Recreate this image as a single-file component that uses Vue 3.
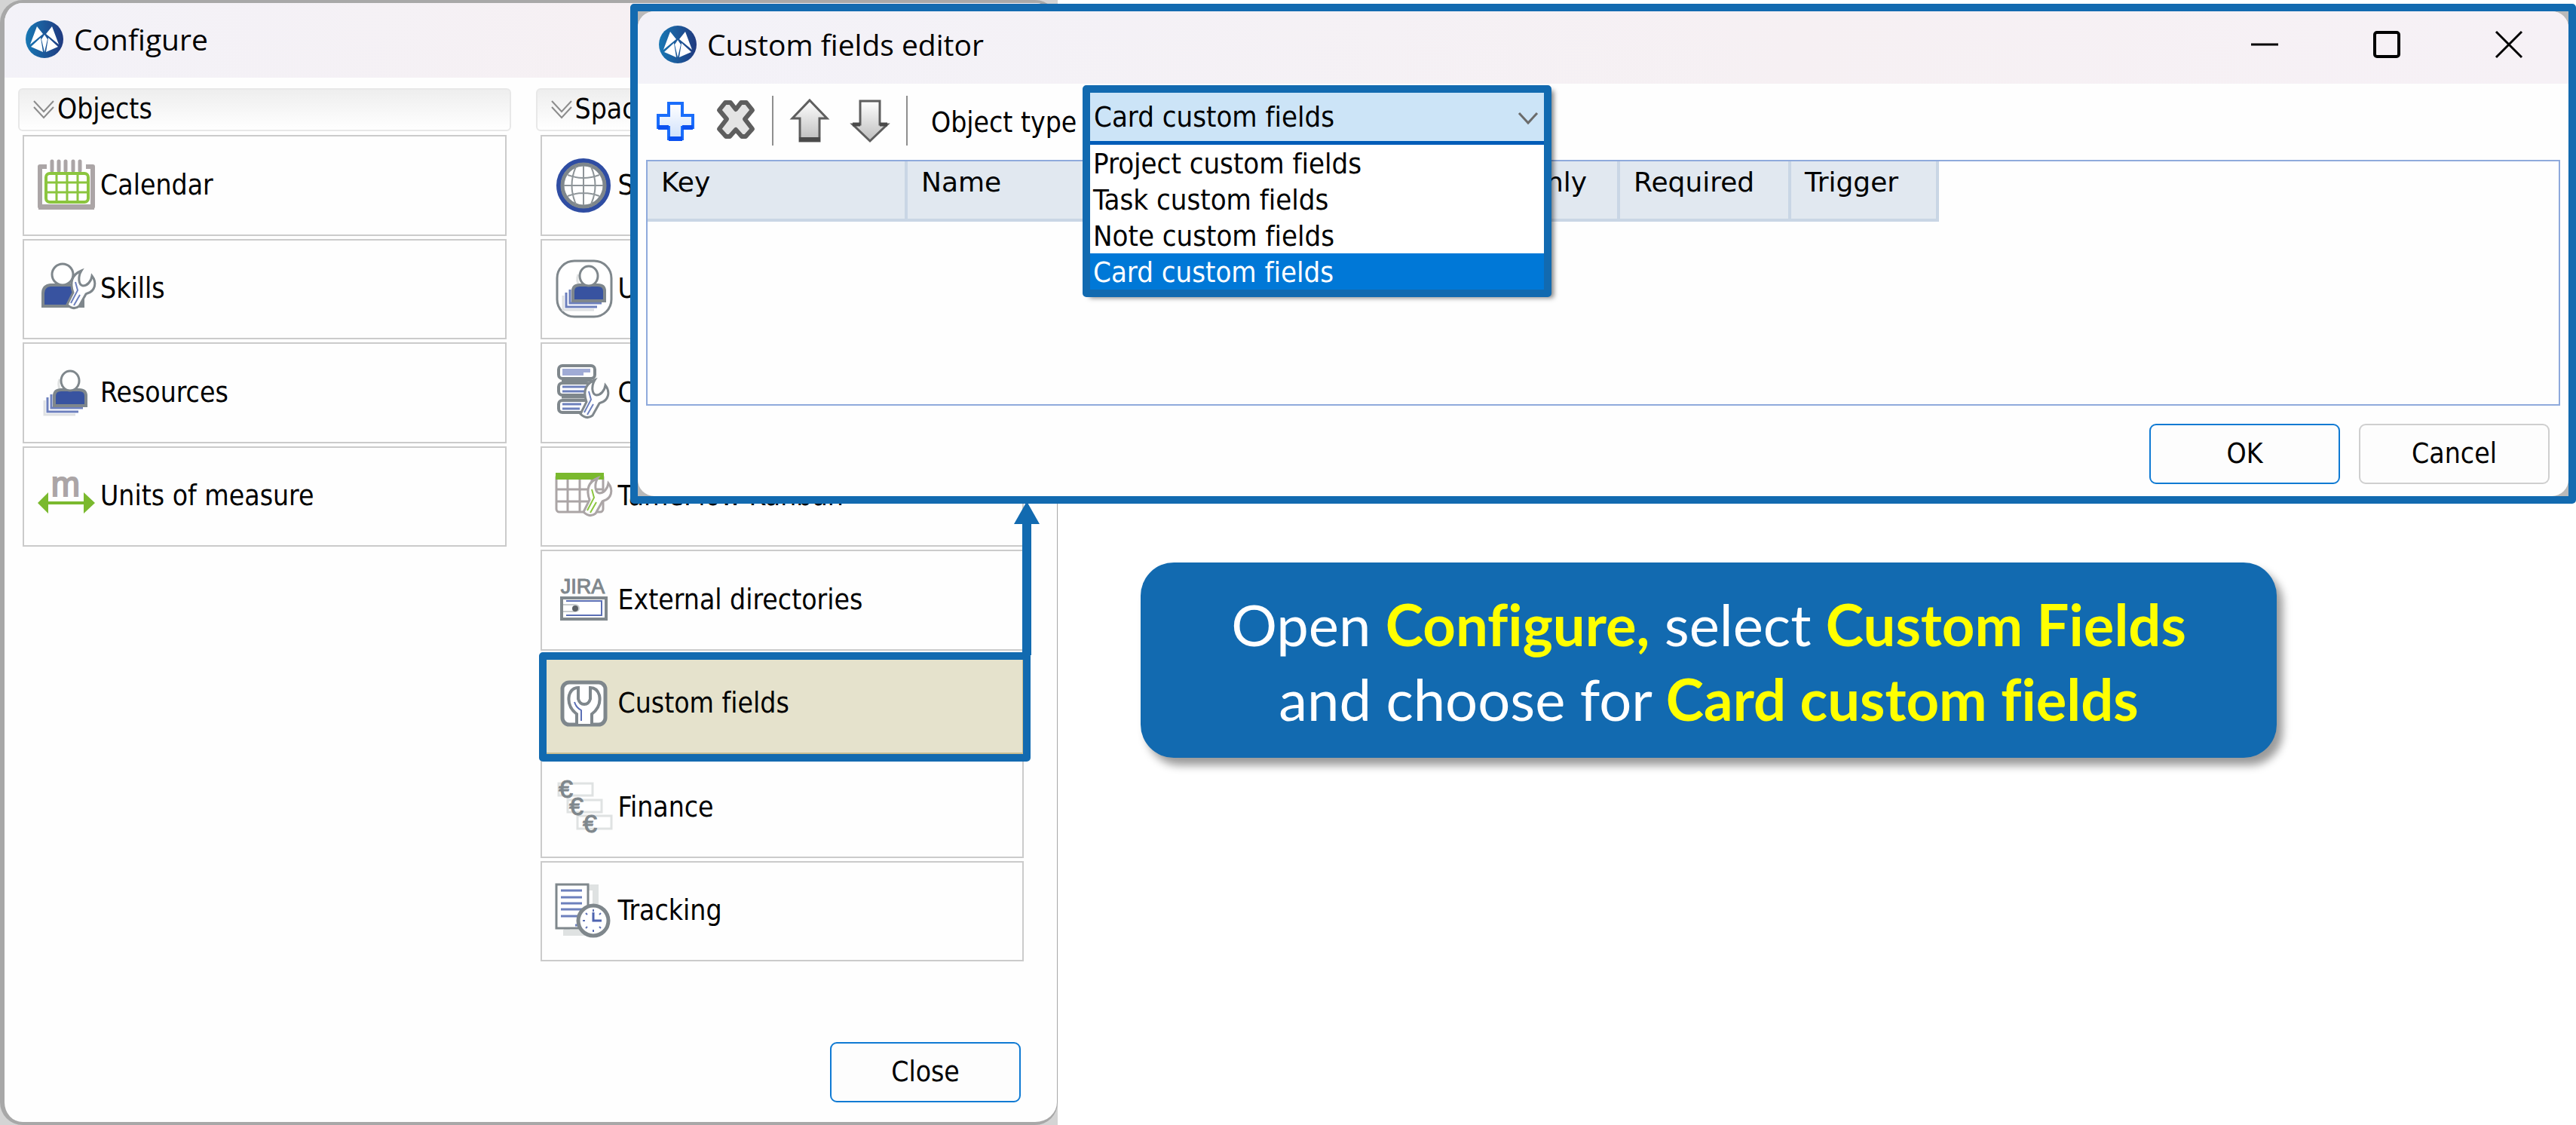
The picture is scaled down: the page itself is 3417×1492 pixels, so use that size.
<script setup>
import { ref } from 'vue'

const wrench = 'M20 1C15 9 16 20 22 21C28 21 33 15 34 8C41 17 38 28 28 31L26 32L17 48Q9 54 1 46L9 30C4 16 8 6 20 1Z'

const person = `
    <path d="M31 22q-3 8 1 14" fill="none" stroke="#e0e2e2" stroke-width="3"/>
    <path d="M11 50V69H52" fill="none" stroke="#dfe1e3" stroke-width="3"/>
    <path d="M15 46V65H56M20 42V60H62" fill="none" stroke="#6d80bd" stroke-width="3"/>
    <path d="M24 57V44q0-8 9-8h24q9 0 9 8v13z" fill="#3853a0" stroke="#7f878c" stroke-width="4"/>
    <ellipse cx="45" cy="24" rx="12" ry="13" fill="#fff" stroke="#7f878c" stroke-width="3"/>`

const icons = {
    calendar: `
        <path d="M14 15H5V68H75V15H66" fill="none" stroke="#aba5a6" stroke-width="6" stroke-linejoin="round"/>
        <path d="M3 69H77" stroke="#aba5a6" stroke-width="6"/>
        <path d="M21 8V20M30 8V20M39 8V20M49 8V20M58 8V20" stroke="#aba5a6" stroke-width="5" stroke-linecap="round"/>
        <rect x="13" y="24" width="56" height="38" rx="5" fill="#fff" stroke="#8bc53f" stroke-width="4"/>
        <path d="M27 24V62M41 24V62M55 24V62M13 36H69M13 49H69" stroke="#8bc53f" stroke-width="3"/>`,
    skills: `
        <path d="M9 63V46q0-10 10-11h34q9 1 9 11v17z" fill="#3853a0" stroke="#7f878c" stroke-width="4"/>
        <circle cx="35" cy="21" r="14" fill="#fff" stroke="#7f878c" stroke-width="3"/>
        <g transform="translate(40 15)"><path d="${wrench}" fill="#fff" stroke="#7f878c" stroke-width="3"/>
        <path d="M12 16L15 27L6 44M18 33L10 47" fill="none" stroke="#6d80bd" stroke-width="2"/></g>`,
    resources: person,
    units: `
        <text x="39" y="40" text-anchor="middle" font-family="Liberation Sans, sans-serif" font-size="46" fill="#aba5a6" stroke="#aba5a6" stroke-width="2">m</text>
        <path d="M2 49L16 35V47H63V35L78 49L63 63V51H16V63Z" fill="#7ab92e"/>`,
    globe: `
        <circle cx="39" cy="40" r="33" fill="#fff" stroke="#2f4da3" stroke-width="6"/>
        <circle cx="39" cy="40" r="28" fill="#fff" stroke="#7f878c" stroke-width="5"/>
        <path d="M39 14V66M13 40H65M18 26Q39 34 60 26M18 54Q39 46 60 54M29 15Q18 40 29 65M49 15Q60 40 49 65" fill="none" stroke="#8e9599" stroke-width="2"/>`,
    users: `
        <rect x="4" y="3" width="72" height="74" rx="23" fill="#fff" stroke="#7f878c" stroke-width="3"/>
        <g transform="translate(1 -1)">${person}</g>`,
    books: `
        <g fill="#fff" stroke="#7f878c" stroke-width="4"><rect x="6" y="4" width="48" height="17" rx="5"/><rect x="6" y="27" width="42" height="16" rx="5"/><rect x="6" y="50" width="42" height="16" rx="5"/></g>
        <path d="M10 24H50M10 46H42" stroke="#7f878c" stroke-width="3"/>
        <path d="M11 8H48V13H39V17H11Z" fill="#a0abd5"/>
        <path d="M11 32H42M11 38H40M11 55H36M11 61H34" stroke="#6d80bd" stroke-width="3"/>
        <g transform="translate(34 22)"><path d="${wrench}" fill="#fff" stroke="#7f878c" stroke-width="3"/>
        <path d="M12 16L15 27L6 44M18 33L10 47" fill="none" stroke="#6d80bd" stroke-width="2"/></g>`,
    kanban: `
        <rect x="3" y="11" width="62" height="50" rx="4" fill="#fff" stroke="#aba5a6" stroke-width="3"/>
        <path d="M18 18V61M34 18V61M50 18V61M3 31H65M3 47H65" stroke="#aba5a6" stroke-width="3"/>
        <path d="M2 9H66V18H2Z" fill="#7ab92e"/>
        <g transform="translate(38 15)"><path d="${wrench}" fill="#fff" stroke="#aba5a6" stroke-width="3"/>
        <path d="M12 16L15 27L6 44M18 33L10 47" fill="none" stroke="#8bc53f" stroke-width="2"/></g>`,
    directory: `
        <text x="38" y="31" text-anchor="middle" font-family="Liberation Sans, sans-serif" font-size="27" fill="#7f878c" stroke="#7f878c">JIRA</text>
        <rect x="10" y="37" width="59" height="28" fill="#fff" stroke="#7f878c" stroke-width="4"/>
        <path d="M16 41H63V60H16" fill="none" stroke="#5b6fb5" stroke-width="2"/>
        <path d="M12 46H28Q33 47 33 51Q33 54 28 55H12" fill="none" stroke="#c9cdcf" stroke-width="2"/>
        <circle cx="28" cy="51" r="4" fill="#5c6166"/>`,
    fields: `
        <rect x="11" y="12" width="57" height="56" rx="9" fill="#fff" stroke="#7f878c" stroke-width="5"/>
        <path d="M30 67V54Q17 44 20 29Q23 19 32 19V34Q34 41 40 41Q46 41 48 34V19Q57 19 60 29Q63 44 50 54V67" fill="#fff" stroke="#7f878c" stroke-width="4"/>
        <path d="M27 38Q29 45 36 49V63" fill="none" stroke="#5b6fb5" stroke-width="2"/>`,
    finance: `
        <g fill="#fff" stroke="#dfe2e2" stroke-width="3"><rect x="6" y="8" width="45" height="16"/><rect x="18" y="30" width="45" height="16"/><rect x="31" y="51" width="45" height="17"/></g>
        <g font-family="Liberation Sans, sans-serif" font-size="34" fill="#7f878c" stroke="#7f878c"><text x="6" y="27">€</text><text x="20" y="50">€</text><text x="38" y="73">€</text></g>`,
    tracking: `
        <path d="M20 9H55V60M12 69H52M17 69V60" fill="none" stroke="#dfe2e2" stroke-width="8"/>
        <rect x="3" y="5" width="42" height="58" fill="#fff" stroke="#7f878c" stroke-width="3"/>
        <path d="M9 13H37M9 22H37M9 30H37M9 38H37M9 47H34M28 59H34" stroke="#6d80bd" stroke-width="3"/>
        <circle cx="52" cy="53" r="20" fill="#fff" stroke="#7f878c" stroke-width="5"/>
        <path d="M52 42V53H63" fill="none" stroke="#4e64b0" stroke-width="3"/>
        <path d="M52 38V41M52 65V68M38 53H41M42 43L44 45M62 43L60 45M42 63L44 61M62 63L60 61" stroke="#5b6fb5" stroke-width="2"/>`
}

const groups = [
    {
        title: 'Objects',
        items: [
            { label: 'Calendar', icon: 'calendar' },
            { label: 'Skills', icon: 'skills' },
            { label: 'Resources', icon: 'resources' },
            { label: 'Units of measure', icon: 'units' }
        ]
    },
    {
        title: 'Space',
        items: [
            { label: 'Space', icon: 'globe' },
            { label: 'Users', icon: 'users' },
            { label: 'Cards', icon: 'books' },
            { label: 'TameFlow Kanban', icon: 'kanban' },
            { label: 'External directories', icon: 'directory' },
            { label: 'Custom fields', icon: 'fields' },
            { label: 'Finance', icon: 'finance' },
            { label: 'Tracking', icon: 'tracking' }
        ]
    }
]

const active = ref('Custom fields')

const objectTypes = ['Project custom fields', 'Task custom fields', 'Note custom fields', 'Card custom fields']
const objectType = ref('Card custom fields')

const columns = [
    { name: 'Key', width: 345 },
    { name: 'Name', width: 705 },
    { name: 'Read only', width: 240 },
    { name: 'Required', width: 227 },
    { name: 'Trigger', width: 196 }
]

const logo = `
    <defs><linearGradient id="logo-fill" x1="0" x2="1"><stop offset="0" stop-color="#1878b4"/><stop offset="1" stop-color="#20397f"/></linearGradient></defs>
    <circle cx="25" cy="25" r="25" fill="url(#logo-fill)"/>
    <path d="M15 8L23 18L6 32ZM35 8L27 18L44 32ZM20 23L23 42L7 35ZM30 23L27 42L43 35ZM25 19L29 25L25 42L21 25Z" fill="#fff"/>`
</script>

<template>
    <main class="desktop">
        <section class="backdrop">
            <div class="configure">
                <header class="titlebar">
                    <svg class="logo" viewBox="0 0 50 50" v-html="logo"></svg>
                    <h1>Configure</h1>
                </header>
                <div class="groups">
                    <section v-for="group in groups" :key="group.title" class="group">
                        <h2>
                            <svg viewBox="0 0 28 26"><path d="M1 2L14 16L27 2M1 10L14 24L27 10" /></svg>
                            {{ group.title }}
                        </h2>
                        <ul>
                            <li v-for="item in group.items" :key="item.label" :class="{ active: active === item.label }">
                                <button class="item" @click="active = item.label">
                                    <svg viewBox="0 0 80 80" v-html="icons[item.icon]"></svg>
                                    {{ item.label }}
                                </button>
                                <svg v-if="active === item.label" class="pointer" viewBox="0 0 34 204">
                                    <path d="M17 0L34 30H23V204H11V30H0Z" />
                                </svg>
                            </li>
                        </ul>
                    </section>
                </div>
                <footer>
                    <button class="btn primary">Close</button>
                </footer>
            </div>
        </section>

        <section class="editor">
            <div class="window">
                <header class="titlebar">
                    <svg class="logo" viewBox="0 0 50 50" v-html="logo"></svg>
                    <h1>Custom fields editor</h1>
                    <div class="controls">
                        <button aria-label="Minimize"><svg viewBox="0 0 36 36"><path d="M0 18H36" /></svg></button>
                        <button aria-label="Maximize"><svg viewBox="0 0 36 36"><rect x="2" y="2" width="32" height="32" rx="3" stroke-width="4" /></svg></button>
                        <button aria-label="Close window"><svg viewBox="0 0 36 36"><path d="M1 1L35 35M35 1L1 35" /></svg></button>
                    </div>
                </header>

                <div class="toolbar">
                    <button aria-label="Add">
                        <svg viewBox="0 0 50 58">
                            <defs><linearGradient id="plus" x2="0" y2="1"><stop offset="0" stop-color="#fff" /><stop offset="1" stop-color="#cfe0fb" /></linearGradient></defs>
                            <path d="M16 6H34V22H48V38H34V53H16V38H2V22H16Z" fill="url(#plus)" stroke="#1a6dfb" stroke-width="4" />
                            <path d="M34 38H48M2 38H16M16 53H34" stroke="#0b50f0" stroke-width="6" />
                        </svg>
                    </button>
                    <button aria-label="Delete">
                        <svg viewBox="0 0 50 58">
                            <defs><linearGradient id="metal" x2="0" y2="1"><stop offset="0" stop-color="#fff" /><stop offset="1" stop-color="#bdbdbd" /></linearGradient></defs>
                            <path d="M11 5H18L25 14L32 5H39L47 15L37 27L47 40L38 50H33L25 41L17 50H12L3 40L13 27L3 15Z" fill="#e4e4e4" stroke="#5e5e5e" stroke-width="6" stroke-linejoin="round" />
                        </svg>
                    </button>
                    <span class="sep"></span>
                    <button aria-label="Move up">
                        <svg viewBox="0 0 50 58">
                            <path d="M25 2L48 26H38V56H12V26H2Z" fill="url(#metal)" stroke="#5e5e5e" stroke-width="3" />
                            <path d="M11 54H39" stroke="#4a4a4a" stroke-width="6" />
                        </svg>
                    </button>
                    <button aria-label="Move down">
                        <svg viewBox="0 0 50 58">
                            <path d="M25 56L48 34H38V3H12V34H2Z" fill="url(#metal)" stroke="#5e5e5e" stroke-width="3" />
                            <path d="M2 34H12M38 34H48" stroke="#4a4a4a" stroke-width="5" />
                        </svg>
                    </button>
                    <span class="sep"></span>
                    <label for="object-type">Object type</label>
                    <div class="combo">
                        <div class="frame">
                            <select id="object-type" v-model="objectType">
                                <option v-for="type in objectTypes" :key="type">{{ type }}</option>
                            </select>
                            <svg class="caret" viewBox="0 0 26 16"><path d="M1 1L13 14L25 1" /></svg>
                            <ul role="listbox">
                                <li v-for="type in objectTypes" :key="type" role="option" :aria-selected="type === objectType" @click="objectType = type">
                                    {{ type }}
                                </li>
                            </ul>
                        </div>
                    </div>
                </div>

                <div class="grid">
                    <table>
                        <thead>
                            <tr>
                                <th v-for="column in columns" :key="column.name" :style="{ width: column.width + 'px' }">{{ column.name }}</th>
                            </tr>
                        </thead>
                    </table>
                </div>

                <footer>
                    <button class="btn primary">OK</button>
                    <button class="btn">Cancel</button>
                </footer>
            </div>
        </section>

        <p class="callout">
            Open <b>Configure,</b> select <b>Custom Fields</b><br>
            and choose for <b>Card custom fields</b>
        </p>
    </main>
</template>

<style>
body {
    margin: 0;
    background: #fff;
}
</style>

<style scoped>
* {
    box-sizing: border-box;
}

.desktop {
    position: relative;
    min-height: 100vh;
    overflow: hidden;
    color: #000;
    font-family: "DejaVu Sans Condensed", "DejaVu Sans", sans-serif;
    font-size: 37px;
    line-height: 48px;
    font-variant-ligatures: none;
}

h1,
h2,
p,
ul {
    margin: 0;
    padding: 0;
    font-weight: 400;
    list-style: none;
}

button,
select {
    font: inherit;
    font-variant-ligatures: none;
    color: inherit;
}

svg {
    flex: none;
    display: block;
    overflow: visible;
}

/* Configure window */
.backdrop {
    width: 1403px;
    height: 100vh;
    background: #d4d4d4;
}

.configure {
    display: flex;
    flex-direction: column;
    height: 100%;
    border: 4px solid #a8a8a8;
    border-width: 4px 1px 4px 6px;
    border-radius: 30px;
    background: #fefefe;
    overflow: hidden;
}

.titlebar {
    display: flex;
    align-items: center;
    gap: 14px;
    padding-left: 28px;
    background: linear-gradient(100deg, #f3f2f8, #f6f0f3 60%, #f6f1f6);
}

.configure .titlebar {
    height: 99px;
    padding-bottom: 4px;
}

.logo {
    width: 50px;
    height: 50px;
}

h1 {
    font-family: "Open Sans", "Noto Sans", sans-serif;
    font-size: 39px;
}

.groups {
    flex: 1;
    display: grid;
    grid-template-columns: 1fr 1fr;
    gap: 33px;
    padding: 14px 38px 0 18px;
}

.group {
    display: flex;
    flex-direction: column;
    gap: 5px;
}

h2 {
    display: flex;
    align-items: center;
    gap: 4px;
    height: 57px;
    padding: 0 18px 2px;
    border: 2px solid #e8e8e8;
    border-radius: 6px;
    background: linear-gradient(#eee, #fff);
    font-size: 37px;
}

h2 svg {
    width: 28px;
    height: 26px;
    fill: none;
    stroke: #8c8c8c;
    stroke-width: 2;
}

.group ul {
    flex: 1;
    display: grid;
    grid-template-rows: repeat(8, 1fr);
    gap: 4px;
    padding: 0 6px;
}

.group li {
    position: relative;
}

.item {
    display: flex;
    align-items: center;
    gap: 5px;
    width: 100%;
    height: 100%;
    padding: 0 0 0 16px;
    border: 2px solid #cbcbcb;
    background: #fefefe;
    text-align: left;
}

.item svg {
    width: 80px;
    height: 80px;
}

.group li.active {
    z-index: 1;
}

.active .item {
    border-color: #c8bd92;
    background: #e5e2cc;
}

.active .item::after {
    content: "";
    position: absolute;
    inset: -2px -9px -10px -2px;
    border: 10px solid #126ab0;
    border-radius: 5px;
}

.pointer {
    position: absolute;
    right: -21px;
    bottom: calc(100% - 2px);
    width: 34px;
    height: 204px;
    fill: #126ab0;
}

.configure footer {
    display: flex;
    justify-content: flex-end;
    padding: 107px 48px 26px;
}

.btn {
    width: 253px;
    height: 80px;
    border: 2px solid #cfcfcf;
    border-radius: 9px;
    background: #fdfdfd;
}

.btn.primary {
    border-color: #0f7ad3;
}

/* Custom fields editor */
.editor {
    position: absolute;
    top: 5px;
    left: 836px;
    right: 0;
    z-index: 2;
    border: 10px solid #126ab0;
    border-radius: 5px;
    background: #b9b9b9;
}

.window {
    border-radius: 22px;
    background: #fefefe;
}

.window .titlebar {
    height: 96px;
    padding-right: 61px;
    padding-bottom: 8px;
    border-radius: 22px 22px 0 0;
}

.controls {
    display: flex;
    gap: 126px;
    margin-left: auto;
}

.controls button,
.toolbar button {
    padding: 0;
    border: 0;
    background: none;
}

.controls svg {
    width: 36px;
    height: 36px;
    fill: none;
    stroke: #000;
    stroke-width: 3;
}

.toolbar {
    display: flex;
    align-items: center;
    gap: 30px;
    height: 101px;
    padding: 0 0 4px 25px;
}

.toolbar svg {
    width: 50px;
    height: 58px;
}

.toolbar .sep {
    width: 2px;
    height: 66px;
    margin: 0 -7px;
    background: #8f8f8f;
}

.toolbar label {
    width: 200px;
    margin-top: 6px;
    margin-left: 8px;
    white-space: nowrap;
}

.combo {
    position: relative;
    align-self: stretch;
    width: 622px;
    margin-left: -29px;
}

.frame {
    position: absolute;
    top: 2px;
    left: 0;
    right: 0;
    z-index: 1;
    border: 10px solid #126ab0;
    border-radius: 5px;
    background: #fff;
    box-shadow: 6px 4px 6px -3px rgba(0, 0, 0, 0.5);
    font-size: 38px;
}

.frame select {
    appearance: none;
    display: block;
    width: 100%;
    height: 69px;
    padding: 0 5px;
    border: 0;
    border-bottom: 5px solid #005cb8;
    border-radius: 0;
    background: #cce4f7;
}

.frame .caret {
    position: absolute;
    top: 26px;
    right: 8px;
    width: 26px;
    height: 16px;
    fill: none;
    stroke: #6b6b6b;
    stroke-width: 3;
}

.frame li {
    height: 48px;
    padding-left: 4px;
    line-height: 50px;
}

.frame li[aria-selected="true"] {
    background: #0078d7;
    color: #fff;
}

.grid {
    height: 326px;
    margin: 0 11px;
    border: 2px solid #8faadc;
}

table {
    table-layout: fixed;
    border-collapse: separate;
    border-spacing: 0;
    width: min-content;
}

th {
    height: 80px;
    padding: 4px 18px 0;
    border-right: 4px solid #c9d6e5;
    border-bottom: 4px solid #c9d6e5;
    background: #e1e8f0;
    font-family: "DejaVu Sans", sans-serif;
    font-size: 36px;
    font-weight: 400;
    text-align: left;
    vertical-align: top;
    white-space: nowrap;
}

.window footer {
    display: flex;
    justify-content: flex-end;
    gap: 25px;
    padding: 24px 25px 16px;
}

/* Hint */
.callout {
    position: absolute;
    top: 746px;
    left: 1513px;
    right: 397px;
    padding: 32px 0 29px;
    border-radius: 44px;
    background: #126ab0;
    box-shadow: 8px 10px 12px rgba(0, 0, 0, 0.4);
    color: #fff;
    font-family: Lato, sans-serif;
    font-size: 76px;
    line-height: 99px;
    text-align: center;
}

.callout b {
    color: #ff0;
}
</style>
